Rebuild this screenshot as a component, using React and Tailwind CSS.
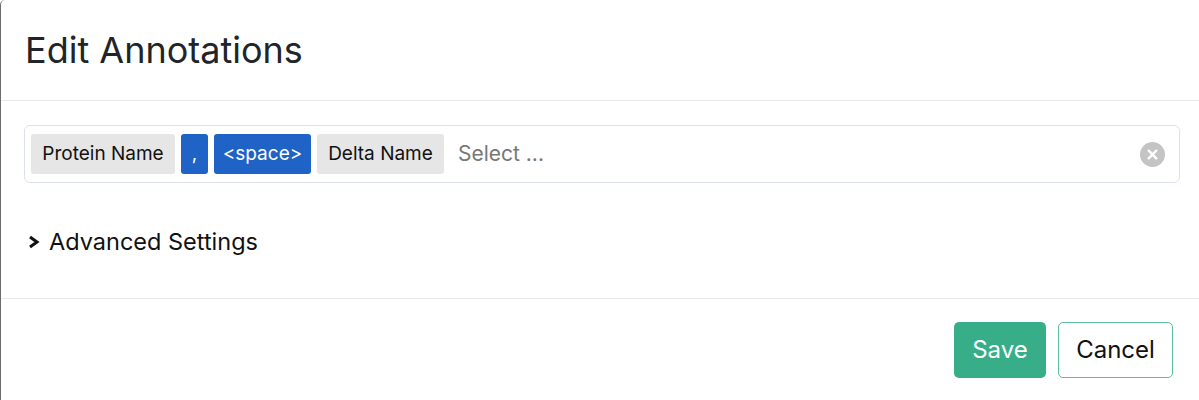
import React from "react";

function Chip({ children, blue, className = "" }) {
  return (
    <div
      className={
        "h-10 flex items-center justify-center rounded-[3px] text-[19px] " +
        (blue ? "bg-[#1f63c6] text-white " : "bg-[#e6e6e6] text-[#111] ") +
        className
      }
    >
      {children}
    </div>
  );
}

export default function App() {
  return (
    <div
      className="w-[1199px] h-[400px] bg-white overflow-hidden"
      style={{ fontFamily: "Inter, 'Open Sans', sans-serif" }}
    >
      <div className="h-[420px] border-l border-[#6b6b6b] rounded-tl-[5px] flex flex-col">
        <div className="h-[101px] border-b border-[#e8e8e8] flex items-center pl-[24px]">
          <h1 className="text-[36px] text-[#212529] leading-none">Edit Annotations</h1>
        </div>
        <div className="pt-[24px] pl-[23px] pr-[19px]">
          <div className="h-[58px] border border-[#dde1ee] rounded-[6px] flex items-center pl-[6px] pr-[14px] gap-[6px]">
            <Chip className="w-[144px]">Protein Name</Chip>
            <Chip blue className="w-[27px]">,</Chip>
            <Chip blue className="w-[97px]">&lt;space&gt;</Chip>
            <Chip className="w-[127px]">Delta Name</Chip>
            <div className="ml-[8px] flex-1 text-[21px] text-[#777]">Select ...</div>
            <div className="w-[25px] h-[25px] rounded-full bg-[#c4c4c4] flex items-center justify-center">
              <svg width="13" height="13" viewBox="0 0 12 12">
                <path d="M2.5 2.5 L9.5 9.5 M9.5 2.5 L2.5 9.5" stroke="white" strokeWidth="2.2" strokeLinecap="round" />
              </svg>
            </div>
          </div>
        </div>
        <div className="h-[116px] flex items-start pt-[41px] pl-[26px] border-b border-[#e8e8e8]">
          <div className="flex items-center gap-[9px]">
            <svg width="13" height="14" viewBox="0 0 13 14">
              <path d="M3 2 L10 7 L3 12" stroke="#111" strokeWidth="3" fill="none" />
            </svg>
            <span className="text-[23.5px] text-[#111]">Advanced Settings</span>
          </div>
        </div>
        <div className="flex justify-end gap-3 pt-[23px] pr-[26px]">
          <button className="h-[56px] w-[92px] rounded-[5px] bg-[#37ae88] text-white text-[24px]">Save</button>
          <button className="h-[56px] w-[115px] rounded-[5px] border border-[#5cbf9c] bg-white text-[#111] text-[24px]">Cancel</button>
        </div>
      </div>
    </div>
  );
}
